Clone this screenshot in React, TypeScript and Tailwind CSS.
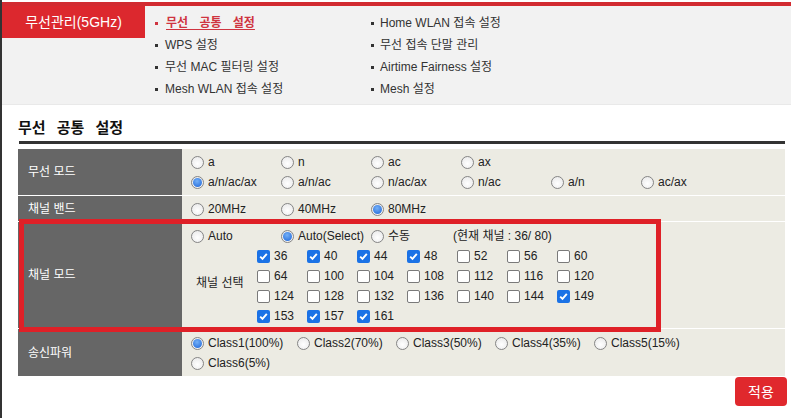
import React from "react";

function Radio({ checked }: { checked?: boolean }) {
  return (
    <span className="w-[13px] h-[13px] rounded-full border border-[#858585] bg-[radial-gradient(circle_at_50%_60%,#ffffff,#e6e6e6)] flex items-center justify-center shrink-0">
      {checked && (
        <span className="w-[9px] h-[9px] rounded-full bg-[radial-gradient(circle_at_45%_35%,#74b0f7,#1a63d8)]" />
      )}
    </span>
  );
}

function Check({ checked }: { checked?: boolean }) {
  if (checked) {
    return (
      <span className="w-[13px] h-[13px] rounded-[2px] bg-[#1b72e6] flex items-center justify-center shrink-0">
        <svg width="11" height="11" viewBox="0 0 11 11">
          <path d="M2.2 5.6 L4.5 7.9 L8.8 2.8" stroke="white" strokeWidth="1.9" fill="none" />
        </svg>
      </span>
    );
  }
  return <span className="w-[13px] h-[13px] rounded-[2px] border border-[#7a7a7a] bg-white shrink-0" />;
}

function RadioItem({ label, checked, w = "w-[90px]" }: { label: string; checked?: boolean; w?: string }) {
  return (
    <div className={`${w} shrink-0 flex items-center gap-[4px] whitespace-nowrap h-[20px]`}>
      <Radio checked={checked} />
      <span>{label}</span>
    </div>
  );
}

const menuLeft = ["WPS 설정", "무선 MAC 필터링 설정", "Mesh WLAN 접속 설정"];
const menuRight = ["Home WLAN 접속 설정", "무선 접속 단말 관리", "Airtime Fairness 설정", "Mesh 설정"];

const channels: [string, boolean][][] = [
  [["36", true], ["40", true], ["44", true], ["48", true], ["52", false], ["56", false], ["60", false]],
  [["64", false], ["100", false], ["104", false], ["108", false], ["112", false], ["116", false], ["120", false]],
  [["124", false], ["128", false], ["132", false], ["136", false], ["140", false], ["144", false], ["149", true]],
  [["153", true], ["157", true], ["161", true]],
];

export default function App() {
  return (
    <div className="w-[791px] h-[418px] bg-white border-l-2 border-[#333] overflow-hidden text-[12px] text-[#222] font-['Liberation_Sans','Noto_Sans_CJK_KR',sans-serif] leading-[20px]">
      {/* top bar */}
      <div className="h-[4px] mt-[2px] bg-[#d22b31]" />

      {/* sub navigation */}
      <div className="h-[99px] bg-[#f2f2f2] border-b border-[#e9e9e9] flex">
        <div className="w-[143px] h-[32px] bg-[#dc282e] text-white text-[14px] flex items-center justify-center">
          무선관리(5GHz)
        </div>
        <div className="ml-[10px] pt-[6px] w-[216px] text-[#333]">
          <div className="flex items-center h-[22px] text-[#cf3440] font-bold underline underline-offset-2 [word-spacing:8px]">
            <span className="w-[3px] h-[3px] bg-[#cf3440] mr-[8px]" />
            무선 공통 설정
          </div>
          {menuLeft.map((m) => (
            <div key={m} className="flex items-center h-[22px]">
              <span className="w-[3px] h-[3px] bg-[#333] mr-[7px]" />
              {m}
            </div>
          ))}
        </div>
        <div className="pt-[6px] text-[#333]">
          {menuRight.map((m) => (
            <div key={m} className="flex items-center h-[22px]">
              <span className="w-[3px] h-[3px] bg-[#333] mr-[6px]" />
              {m}
            </div>
          ))}
        </div>
      </div>

      {/* title */}
      <div className="ml-[16px] mt-[14px] text-[15px] font-bold text-[#111] leading-[18px] [word-spacing:7px]">
        무선 공통 설정
      </div>
      <div className="ml-[17px] mt-[4px] w-[766px] h-[3px] bg-[#333]" />

      {/* settings table */}
      <div className="relative ml-[16px] mt-[5px] w-[767px]">
        <div className="flex border-b border-white">
          <div className="w-[164px] bg-[#666] text-white flex items-center pl-[10px]">무선 모드</div>
          <div className="flex-1 bg-[#ecebe3] pl-[9px] pt-[3px] pb-[3px]">
            <div className="flex">
              <RadioItem label="a" />
              <RadioItem label="n" />
              <RadioItem label="ac" />
              <RadioItem label="ax" />
            </div>
            <div className="flex">
              <RadioItem label="a/n/ac/ax" checked />
              <RadioItem label="a/n/ac" />
              <RadioItem label="n/ac/ax" />
              <RadioItem label="n/ac" />
              <RadioItem label="a/n" />
              <RadioItem label="ac/ax" />
            </div>
          </div>
        </div>

        <div className="flex border-b border-white">
          <div className="w-[164px] bg-[#666] text-white flex items-center pl-[10px]">채널 밴드</div>
          <div className="flex-1 bg-[#ecebe3] pl-[9px] pt-[3px] pb-[2px] flex">
            <RadioItem label="20MHz" />
            <RadioItem label="40MHz" />
            <RadioItem label="80MHz" checked />
          </div>
        </div>

        <div className="flex border-b border-white">
          <div className="w-[164px] bg-[#666] text-white flex items-center pl-[10px]">채널 모드</div>
          <div className="flex-1 bg-[#ecebe3] pt-[4px] pb-[2px]">
            <div className="flex pl-[9px]">
              <RadioItem label="Auto" />
              <RadioItem label="Auto(Select)" checked />
              <RadioItem label="수동" w="w-[82px]" />
              <span className="h-[20px] whitespace-nowrap">(현재 채널 : 36/ 80)</span>
            </div>
            <div className="flex items-center pl-[14px]">
              <div className="w-[61px] pb-[6px]">채널 선택</div>
              <div>
                {channels.map((row, i) => (
                  <div key={i} className="flex h-[20px]">
                    {row.map(([ch, on]) => (
                      <div key={ch} className="w-[50px] flex items-center gap-[4px]">
                        <Check checked={on} />
                        <span>{ch}</span>
                      </div>
                    ))}
                  </div>
                ))}
              </div>
            </div>
          </div>
        </div>

        <div className="flex">
          <div className="w-[164px] bg-[#666] text-white flex items-center pl-[10px]">송신파워</div>
          <div className="flex-1 bg-[#ecebe3] pl-[9px] pt-[4px] pb-[3px]">
            <div className="flex">
              <RadioItem label="Class1(100%)" checked w="w-[106px]" />
              <RadioItem label="Class2(70%)" w="w-[99px]" />
              <RadioItem label="Class3(50%)" w="w-[99px]" />
              <RadioItem label="Class4(35%)" w="w-[99px]" />
              <RadioItem label="Class5(15%)" w="w-[99px]" />
            </div>
            <div className="flex">
              <RadioItem label="Class6(5%)" />
            </div>
          </div>
        </div>

        {/* highlight box */}
        <div className="absolute left-[1px] top-[70px] w-[642px] h-[113px] border-[5px] border-[#df2027] pointer-events-none" />
      </div>

      {/* apply */}
      <div className="flex justify-end pr-[4px] mt-[1px]">
        <button className="w-[52px] h-[29px] rounded-[4px] bg-[#e0282d] text-white text-[14px]">적용</button>
      </div>
    </div>
  );
}
